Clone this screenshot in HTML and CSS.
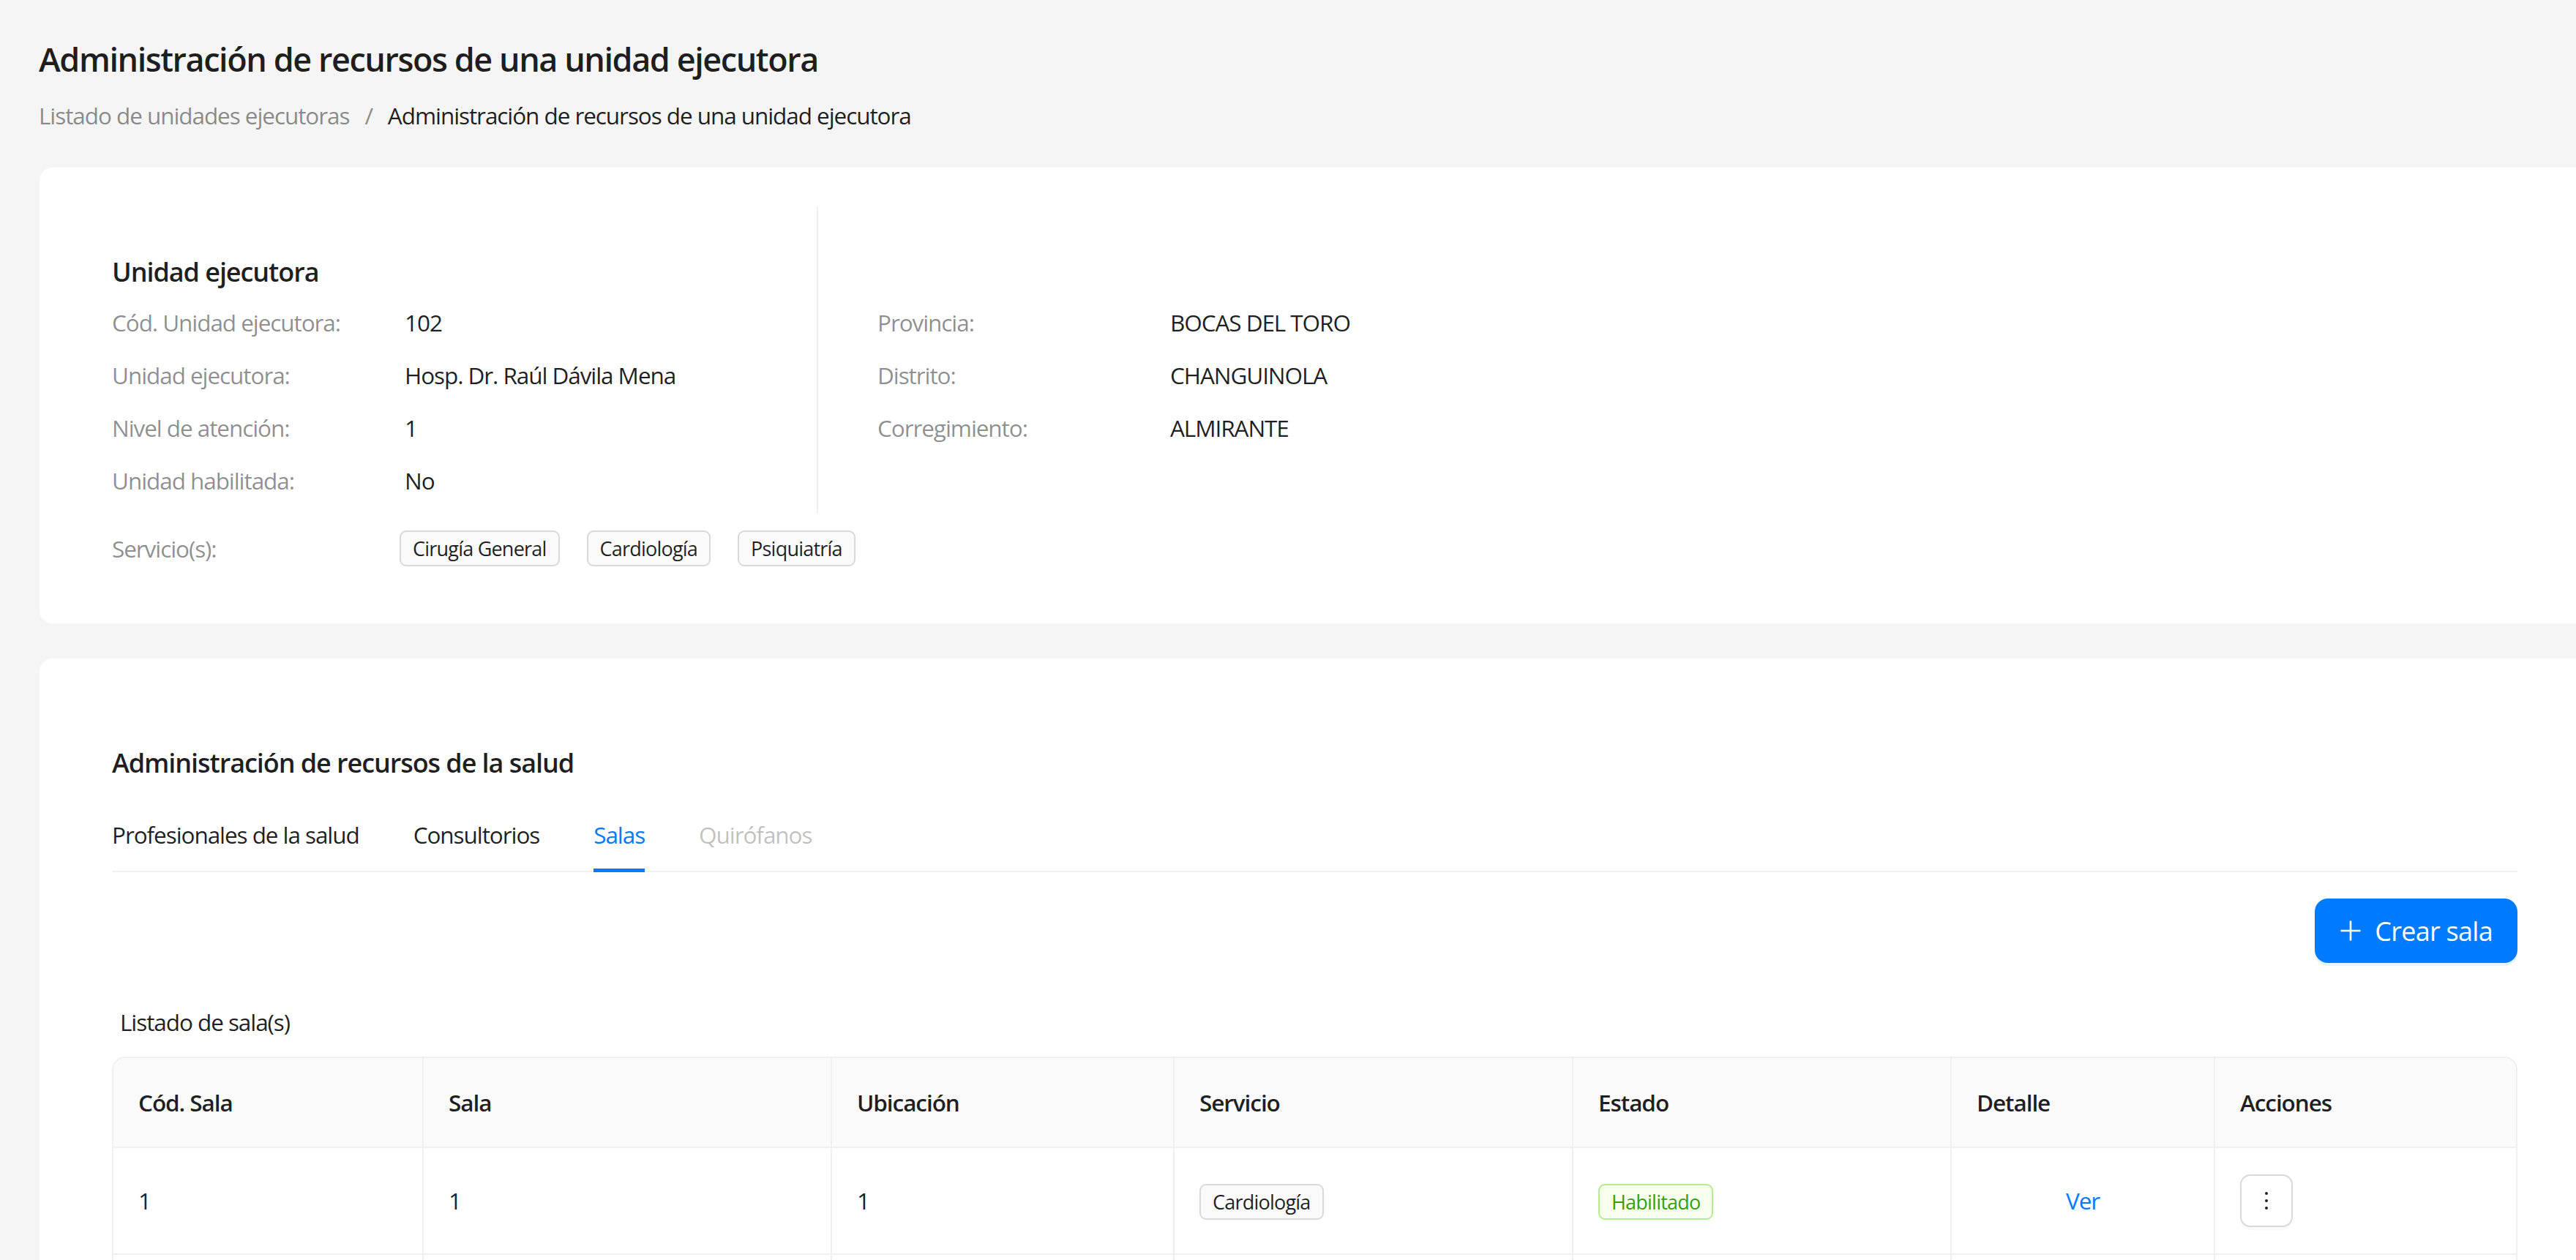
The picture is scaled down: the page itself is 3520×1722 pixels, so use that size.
FILE: index.html
```html
<!DOCTYPE html>
<html lang="es">
<head>
<meta charset="utf-8">
<title>Administración de recursos de una unidad ejecutora</title>
<link rel="stylesheet" href="styles.css">
</head>
<body>
<div class="page">
  <header class="page-header">
    <h1 class="page-title">Administración de recursos de una unidad ejecutora</h1>
    <nav class="breadcrumb">
      <span class="crumb-link">Listado de unidades ejecutoras</span>
      <span class="crumb-sep">/</span>
      <span class="crumb-current">Administración de recursos de una unidad ejecutora</span>
    </nav>
  </header>

  <section class="card card-unit">
    <div class="unit-cols">
      <div class="unit-col unit-col-left">
        <h2 class="section-title">Unidad ejecutora</h2>
        <div class="info-list">
          <div class="info-row"><span class="info-label">Cód. Unidad ejecutora:</span><span class="info-value">102</span></div>
          <div class="info-row"><span class="info-label">Unidad ejecutora:</span><span class="info-value">Hosp. Dr. Raúl Dávila Mena</span></div>
          <div class="info-row"><span class="info-label">Nivel de atención:</span><span class="info-value">1</span></div>
          <div class="info-row"><span class="info-label">Unidad habilitada:</span><span class="info-value">No</span></div>
        </div>
      </div>
      <div class="unit-col unit-col-right">
        <div class="section-title-spacer"></div>
        <div class="info-list">
          <div class="info-row"><span class="info-label">Provincia:</span><span class="info-value">BOCAS DEL TORO</span></div>
          <div class="info-row"><span class="info-label">Distrito:</span><span class="info-value">CHANGUINOLA</span></div>
          <div class="info-row"><span class="info-label">Corregimiento:</span><span class="info-value">ALMIRANTE</span></div>
        </div>
      </div>
    </div>
    <div class="services-row">
      <span class="info-label services-label">Servicio(s):</span>
      <div class="tags">
        <span class="tag">Cirugía General</span>
        <span class="tag">Cardiología</span>
        <span class="tag">Psiquiatría</span>
      </div>
    </div>
  </section>

  <section class="card card-resources">
    <h2 class="section-title">Administración de recursos de la salud</h2>
    <div class="tabs">
      <span class="tab">Profesionales de la salud</span>
      <span class="tab">Consultorios</span>
      <span class="tab tab-active">Salas</span>
      <span class="tab tab-disabled">Quirófanos</span>
    </div>
    <div class="toolbar">
      <button class="btn-primary" type="button">
        <svg class="btn-icon" viewBox="0 0 30 30" aria-hidden="true"><path d="M15 1.5v27M1.5 15h27" stroke="currentColor" stroke-width="2.6" fill="none"/></svg>
        <span>Crear sala</span>
      </button>
    </div>
    <div class="list-title">Listado de sala(s)</div>
    <div class="table-wrap">
      <table class="data-table">
        <colgroup>
          <col class="col-cod"><col class="col-sala"><col class="col-ubic"><col class="col-serv"><col class="col-estado"><col class="col-detalle"><col class="col-acciones">
        </colgroup>
        <thead>
          <tr><th>Cód. Sala</th><th>Sala</th><th>Ubicación</th><th>Servicio</th><th>Estado</th><th>Detalle</th><th>Acciones</th></tr>
        </thead>
        <tbody>
          <tr>
            <td>1</td>
            <td>1</td>
            <td>1</td>
            <td><span class="tag tag-sm">Cardiología</span></td>
            <td><span class="tag tag-sm tag-success">Habilitado</span></td>
            <td class="cell-center"><a class="link">Ver</a></td>
            <td><button class="btn-more" type="button" aria-label="Acciones"><svg viewBox="64 64 896 896" class="more-icon" aria-hidden="true"><path d="M456 231a56 56 0 10112 0 56 56 0 10-112 0zm0 280a56 56 0 10112 0 56 56 0 10-112 0zm0 280a56 56 0 10112 0 56 56 0 10-112 0z" fill="currentColor"/></svg></button></td>
          </tr>
          <tr class="row-empty"><td></td><td></td><td></td><td></td><td></td><td></td><td></td></tr>
        </tbody>
      </table>
    </div>
  </section>
</div>
</body>
</html>
```

FILE: styles.css
```css
html, body {
  margin: 0;
  padding: 0;
  height: 1722px;
  overflow: hidden;
}

body {
  background: #f5f5f5;
  font-family: "Open Sans", "Noto Sans", sans-serif;
  font-size: 31.5px;
  line-height: 49.5px;
  letter-spacing: -0.034em;
  color: rgba(0, 0, 0, 0.88);
}

.page {
  width: 3540px;
  padding: 49px 0 0 53px;
  box-sizing: border-box;
}

.page-title {
  margin: 0;
  font-size: 45px;
  line-height: 63px;
  font-weight: 600;
  letter-spacing: -0.032em;
  color: rgba(0, 0, 0, 0.88);
}

.breadcrumb {
  margin-top: 21px;
  display: flex;
  align-items: center;
  white-space: nowrap;
}

.crumb-link { color: rgba(0, 0, 0, 0.45); }
.crumb-sep { color: rgba(0, 0, 0, 0.45); margin: 0 21px; }
.crumb-current { color: rgba(0, 0, 0, 0.88); }

.card {
  background: #ffffff;
  border-radius: 18px;
  width: 3485px;
  margin-left: 1px;
  box-sizing: border-box;
  padding-left: 99px;
  padding-right: 99px;
}

.card-unit {
  margin-top: 46px;
  padding-top: 53px;
  padding-bottom: 77px;
}

.unit-cols {
  display: flex;
}

.unit-col {
  padding-top: 63px;
  padding-bottom: 21px;
}

.unit-col-left {
  width: 963px;
  border-right: 2px solid #f0f0f0;
}

.unit-col-right {
  padding-left: 81px;
}

.section-title {
  margin: 0 0 17px;
  font-size: 36px;
  line-height: 54px;
  font-weight: 600;
  color: rgba(0, 0, 0, 0.88);
}

.section-title-spacer {
  height: 54px;
  margin-bottom: 17px;
}

.info-list {
  display: flex;
  flex-direction: column;
  gap: 22.5px;
}

.info-row {
  display: flex;
  white-space: nowrap;
}

.info-label {
  width: 400px;
  flex: none;
  color: rgba(0, 0, 0, 0.45);
}

.info-value {
  color: rgba(0, 0, 0, 0.88);
}

.services-row {
  display: flex;
  align-items: center;
  margin-top: 23px;
}

.services-label {
  width: 393px;
}

.tags {
  display: flex;
  gap: 37px;
}

.tag {
  display: inline-block;
  box-sizing: border-box;
  height: 49px;
  padding: 0 16px;
  font-size: 27px;
  line-height: 45px;
  letter-spacing: -0.029em;
  background: #fafafa;
  border: 2px solid #d9d9d9;
  border-radius: 9px;
  color: rgba(0, 0, 0, 0.88);
  white-space: nowrap;
}

.tag-success {
  background: #f6ffed;
  border-color: #b7eb8f;
  color: #389e0d;
}

.card-resources {
  margin-top: 48px;
  padding-top: 116px;
  padding-bottom: 0;
  height: 900px;
}

.tabs {
  margin-top: 22px;
  display: flex;
  gap: 74px;
  border-bottom: 2px solid #f0f0f0;
}

.tab {
  position: relative;
  padding: 24px 0 25px;
  color: rgba(0, 0, 0, 0.88);
  white-space: nowrap;
}

.tab-active {
  color: #007bff;
}

.tab-active::after {
  content: "";
  position: absolute;
  left: 0;
  right: 0;
  bottom: -2px;
  height: 5px;
  background: #007bff;
}

.tab-disabled {
  color: rgba(0, 0, 0, 0.25);
}

.toolbar {
  margin-top: 36px;
  display: flex;
  justify-content: flex-end;
}

.btn-primary {
  display: inline-flex;
  align-items: center;
  gap: 18px;
  height: 88px;
  padding: 0 34px;
  border: none;
  border-radius: 18px;
  background: #007bff;
  color: #ffffff;
  font-family: "Open Sans", "Noto Sans", sans-serif;
  font-size: 36px;
  letter-spacing: -0.02em;
  box-shadow: 0 4px 0 rgba(5, 145, 255, 0.1);
}

.btn-icon {
  width: 30px;
  height: 30px;
}

.list-title {
  margin-top: 56px;
  padding-left: 11px;
}

.table-wrap {
  margin-top: 22px;
  border: 2px solid #f0f0f0;
  border-bottom: none;
  border-radius: 18px 18px 0 0;
  overflow: hidden;
}

.data-table {
  width: 100%;
  table-layout: fixed;
  border-collapse: collapse;
}

.col-cod { width: 423px; }
.col-sala { width: 558px; }
.col-ubic { width: 468px; }
.col-serv { width: 545px; }
.col-estado { width: 517px; }
.col-detalle { width: 360px; }
.col-acciones { width: auto; }

.data-table th,
.data-table td {
  padding: 36px 34px;
  text-align: left;
  border-right: 2px solid #f0f0f0;
  border-bottom: 2px solid #f0f0f0;
  vertical-align: middle;
}

.data-table th:last-child,
.data-table td:last-child {
  border-right: none;
}

.data-table th {
  background: #fafafa;
  font-weight: 600;
  height: 49.5px;
}

.data-table td {
  height: 72px;
}

.data-table td.cell-center {
  text-align: center;
}

.link {
  color: #007bff;
  cursor: pointer;
}

.btn-more {
  display: inline-flex;
  align-items: center;
  justify-content: center;
  width: 72px;
  height: 72px;
  padding: 0;
  background: #ffffff;
  border: 2px solid #d9d9d9;
  border-radius: 14px;
  color: rgba(0, 0, 0, 0.88);
  box-shadow: 0 4px 0 rgba(0, 0, 0, 0.02);
}

.more-icon {
  width: 32px;
  height: 32px;
}
```
